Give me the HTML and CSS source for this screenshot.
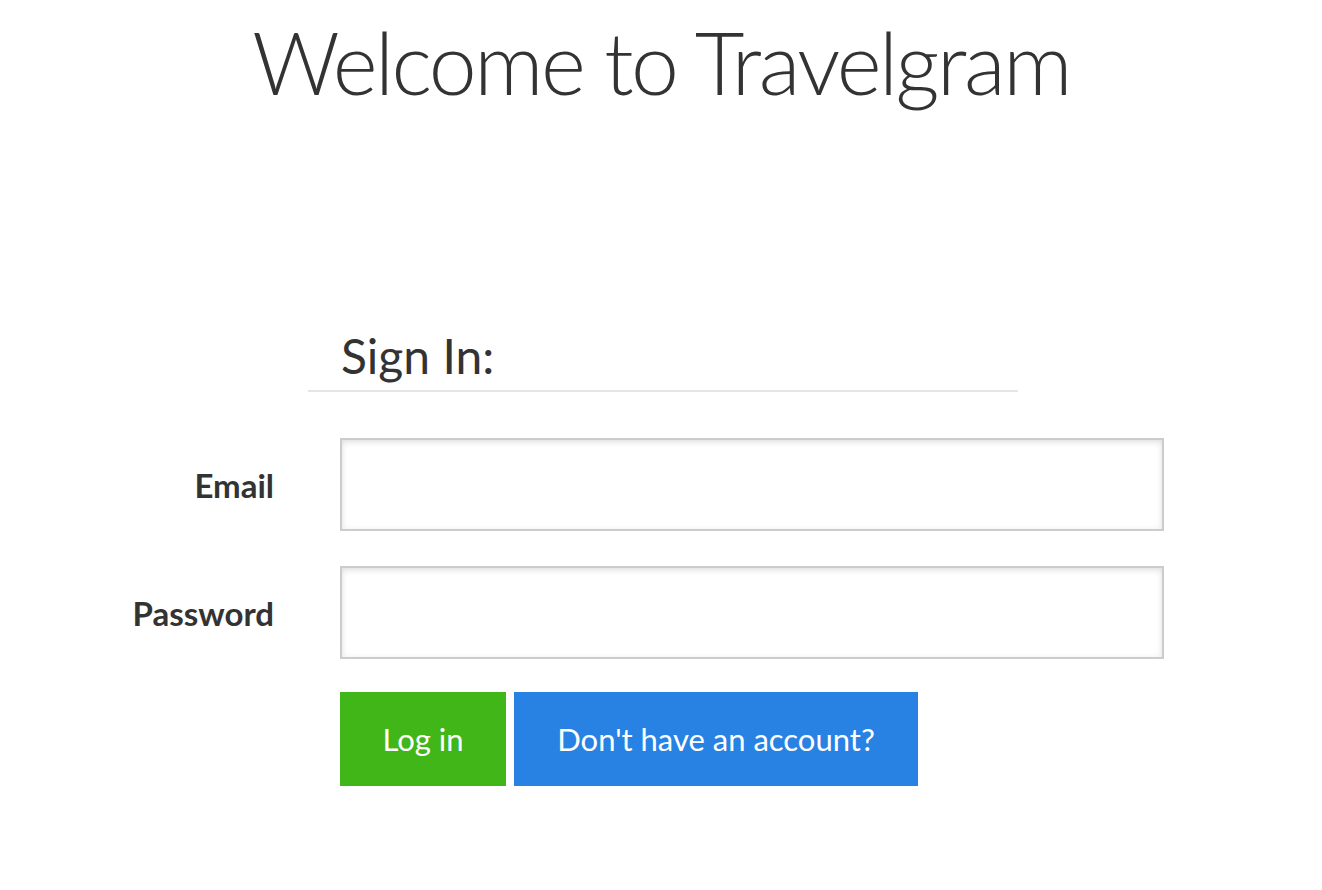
FILE: index.html
```html
<!DOCTYPE html>
<html>
<head>
<meta charset="utf-8">
<link rel="stylesheet" href="styles.css">
</head>
<body>
<h1 class="title">Welcome to Travelgram</h1>
<form class="signin">
  <div class="legend-wrap">
    <div class="legend">Sign In:</div>
  </div>
  <div class="row">
    <label class="label" for="email">Email</label>
    <input class="field" id="email" type="email">
  </div>
  <div class="row">
    <label class="label" for="password">Password</label>
    <input class="field" id="password" type="password">
  </div>
  <div class="row">
    <span class="label"></span>
    <div class="actions">
      <button type="button" class="btn btn-green">Log in</button>
      <button type="button" class="btn btn-blue">Don't have an account?</button>
    </div>
  </div>
</form>
</body>
</html>
```
FILE: styles.css
```css
html, body {
  margin: 0;
  padding: 0;
  background: #fff;
}
body {
  font-family: Lato, "Noto Sans", sans-serif;
  color: #333;
}
.title {
  margin: 12px 0 0;
  text-align: center;
  font-weight: 300;
  font-size: 86px;
  line-height: 100px;
  letter-spacing: -2.5px;
  color: #333;
}
.signin {
  margin-top: 218px;
  display: flex;
  flex-direction: column;
}
.legend-wrap {
  margin-left: 308px;
  width: 710px;
  border-bottom: 2px solid #e5e5e5;
  padding-left: 33px;
  box-sizing: border-box;
}
.legend {
  font-size: 48px;
  line-height: 52px;
  padding-bottom: 8px;
  font-weight: 400;
}
.row {
  display: grid;
  grid-template-columns: 274px 824px;
  column-gap: 66px;
  align-items: center;
  margin-top: 35px;
}
.row:nth-child(2) { margin-top: 46px; }
.label {
  text-align: right;
  font-weight: 700;
  font-size: 33px;
}
.field {
  height: 93px;
  box-sizing: border-box;
  border: 2px solid #ccc;
  box-shadow: inset 0 2px 6px #ddd;
  border-radius: 0;
  margin: 0;
  padding: 0 20px;
  font-size: 30px;
  font-family: inherit;
  background: #fff;
}
.actions {
  display: flex;
  gap: 8px;
  margin-top: -2px;
}
.btn {
  height: 94px;
  border: 0;
  margin: 0;
  color: #fff;
  font-family: inherit;
  font-size: 31px;
  font-weight: 400;
  cursor: pointer;
}
.btn-green {
  width: 166px;
  background: #41b619;
}
.btn-blue {
  width: 404px;
  background: #2882e4;
}
```
